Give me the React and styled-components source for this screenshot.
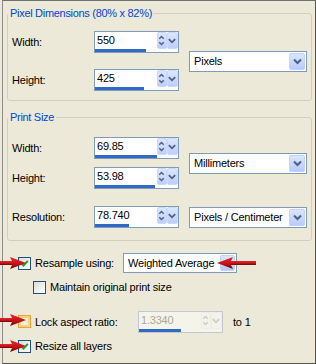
import React from 'react'
import styled, { createGlobalStyle } from 'styled-components'

const GlobalStyle = createGlobalStyle`
  html, body {
    margin: 0;
    padding: 0;
    background: #ece9d8;
  }
  body {
    font-family: "Liberation Sans", Arial, sans-serif;
    font-size: 11px;
    letter-spacing: -0.2px;
    color: #000;
  }
`

const pixelRows = [
  { label: 'Width:', value: '550', fill: 51 },
  { label: 'Height:', value: '425', fill: 49 },
]

const printRows = [
  { label: 'Width:', value: '69.85', fill: 62 },
  { label: 'Height:', value: '53.98', fill: 60 },
]

const Resize = () => (
  <Panel>
    <GlobalStyle />
    <Group>
      <Legend>Pixel Dimensions (80% x 82%)</Legend>
      <Fields $top={11} $bottom={9} $gap={16}>
        {pixelRows.map((row, idx) => (
          <React.Fragment key={row.label}>
            <Label $row={idx + 1}>{row.label}</Label>
            <Spin row={idx + 1} value={row.value} fill={row.fill} />
          </React.Fragment>
        ))}
        <Combo $row="1 / span 2" $w={118} $h={21}>
          <ComboText>Pixels</ComboText>
          <ComboButton>
            <Chevron />
          </ComboButton>
        </Combo>
      </Fields>
    </Group>

    <Group $space={10}>
      <Legend>Print Size</Legend>
      <Fields $top={13} $bottom={12} $gap={8}>
        {printRows.map((row, idx) => (
          <React.Fragment key={row.label}>
            <Label $row={idx + 1}>{row.label}</Label>
            <Spin row={idx + 1} value={row.value} fill={row.fill} />
          </React.Fragment>
        ))}
        <Combo $row="1 / span 2" $w={118} $h={21}>
          <ComboText>Millimeters</ComboText>
          <ComboButton>
            <Chevron />
          </ComboButton>
        </Combo>
        <Label $row={3} $push={9}>Resolution:</Label>
        <Spin row={3} push={9} value="78.740" fill={34} />
        <Combo $row={3} $push={9} $w={118} $h={21}>
          <ComboText>Pixels / Centimeter</ComboText>
          <ComboButton>
            <Chevron />
          </ComboButton>
        </Combo>
      </Fields>
    </Group>

    <Options>
      <OptionRow $h={22}>
        <Check checked />
        <CheckText $w={88}>Resample using:</CheckText>
        <Combo $w={114} $h={20}>
          <ComboText>Weighted Average</ComboText>
          <ComboButton $w={15}>
            <Chevron />
          </ComboButton>
        </Combo>
      </OptionRow>
      <OptionRow $h={20} $mt={3} $indent={15}>
        <Check />
        <CheckText>Maintain original print size</CheckText>
      </OptionRow>
      <OptionRow $h={23} $mt={13}>
        <Check hot />
        <CheckText $w={103}>Lock aspect ratio:</CheckText>
        <Spin value="1.3340" fill={42} disabled />
        <Suffix>to 1</Suffix>
      </OptionRow>
      <OptionRow $h={20} $mt={3}>
        <Check checked />
        <CheckText>Resize all layers</CheckText>
      </OptionRow>
    </Options>

    <Arrow x={-4} y={255} />
    <Arrow x={213} y={255} left />
    <Arrow x={-4} y={312} />
    <Arrow x={-4} y={338} />
  </Panel>
)

export default Resize

const Spin = ({ row, push, value, fill, disabled }) => (
  <SpinBox $row={row} $push={push} $disabled={disabled}>
    <SpinTop>
      <SpinValue $disabled={disabled}>{value}</SpinValue>
      <SpinButton $w={10} $disabled={disabled}>
        <svg width="10" height="17" viewBox="0 0 10 17">
          <polyline
            points="2.5,6.5 5,4 7.5,6.5"
            fill="none"
            stroke={disabled ? '#cfcdc2' : '#4d6185'}
            strokeWidth="1.6"
          />
          <polyline
            points="2.5,10.5 5,13 7.5,10.5"
            fill="none"
            stroke={disabled ? '#cfcdc2' : '#4d6185'}
            strokeWidth="1.6"
          />
        </svg>
      </SpinButton>
      <SpinButton $w={11} $disabled={disabled}>
        <svg width="11" height="17" viewBox="0 0 11 17">
          <polyline
            points="2,7 5.5,10.5 9,7"
            fill="none"
            stroke={disabled ? '#cfcdc2' : '#4d6185'}
            strokeWidth="2"
          />
        </svg>
      </SpinButton>
    </SpinTop>
    <BarTrack>
      <BarFill style={{ width: fill }} />
    </BarTrack>
  </SpinBox>
)

const Chevron = () => (
  <svg width="9" height="7" viewBox="0 0 9 7">
    <polyline
      points="1,1.5 4.5,5 8,1.5"
      fill="none"
      stroke="#4d6185"
      strokeWidth="2"
    />
  </svg>
)

const Check = ({ checked, hot }) => (
  <CheckBox $hot={hot}>
    {checked && (
      <svg width="9" height="9" viewBox="0 0 9 9">
        <polyline
          points="1.2,4.2 3.5,6.6 7.8,1.8"
          fill="none"
          stroke="#21a121"
          strokeWidth="2"
        />
      </svg>
    )}
  </CheckBox>
)

const Arrow = ({ x, y, left }) => (
  <ArrowMark $x={x} $y={y} $left={left}>
    <svg width="40" height="14" viewBox="0 0 40 14">
      <defs>
        <linearGradient id="red" x1="0" y1="0" x2="0" y2="1">
          <stop offset="0" stopColor="#e8262a" />
          <stop offset="0.55" stopColor="#c4141a" />
          <stop offset="1" stopColor="#6e0606" />
        </linearGradient>
      </defs>
      {left ? (
        <g fill="url(#red)">
          <rect x="14" y="5" width="26" height="4" />
          <polygon points="1,7 17,1 14,7 17,13" />
        </g>
      ) : (
        <g fill="url(#red)">
          <rect x="0" y="5" width="26" height="4" />
          <polygon points="39,7 23,1 26,7 23,13" />
        </g>
      )}
    </svg>
  </ArrowMark>
)

const Panel = styled.div`
  position: relative;
  box-sizing: border-box;
  width: 314px;
  height: 364px;
  margin-left: 2px;
  padding: 6px 3px 0 4px;
  background: #ece9d8;
  border: 1px solid #8c8c8c;
  border-top-color: #707070;
  border-right-color: #555555;
  border-bottom-color: #555555;
  overflow: visible;
`

const Group = styled.fieldset`
  margin: ${p => p.$space || 0}px 0 0 0;
  padding: 0;
  min-width: 0;
  border: 1px solid #d0d0bf;
  border-radius: 3px;
`

const Legend = styled.legend`
  margin: 0;
  padding: 0 2px;
  line-height: 13px;
  color: #0046d5;
  letter-spacing: -0.3px;
`

const Fields = styled.div`
  display: grid;
  grid-template-columns: 72px 85px 118px;
  column-gap: 10px;
  row-gap: ${p => p.$gap}px;
  padding: ${p => p.$top}px 0 ${p => p.$bottom}px 4px;
`

const Label = styled.div`
  grid-column: 1;
  grid-row: ${p => p.$row};
  align-self: center;
  margin-top: ${p => p.$push || 0}px;
`

const SpinBox = styled.div`
  grid-column: 2;
  grid-row: ${p => p.$row || 'auto'};
  margin-top: ${p => p.$push || 0}px;
  box-sizing: border-box;
  width: 85px;
  height: 22px;
  display: flex;
  flex-direction: column;
  border: 1px solid ${p => (p.$disabled ? '#c3c8d0' : '#7f9db9')};
  background: ${p => (p.$disabled ? '#f5f4ea' : '#ffffff')};
`

const SpinTop = styled.div`
  display: flex;
  height: 17px;
`

const SpinValue = styled.div`
  flex: 1;
  padding-left: 2px;
  line-height: 17px;
  color: ${p => (p.$disabled ? '#aca899' : '#000000')};
`

const SpinButton = styled.div`
  box-sizing: border-box;
  width: ${p => p.$w}px;
  height: 17px;
  display: flex;
  border-radius: 2px;
  border: 1px solid ${p => (p.$disabled ? '#eeede5' : '#c9d8fb')};
  background: ${p =>
    p.$disabled
      ? '#f3f2ec'
      : 'linear-gradient(#dce7fe, #bccefa)'};
  svg {
    margin: -1px 0 0 -1px;
  }
`

const BarTrack = styled.div`
  flex: 1;
  display: flex;
  align-items: flex-end;
`

const BarFill = styled.div`
  height: 3px;
  background: #316ac5;
`

const Combo = styled.div`
  grid-column: 3;
  grid-row: ${p => p.$row || 'auto'};
  align-self: center;
  margin-top: ${p => p.$push || 0}px;
  box-sizing: border-box;
  width: ${p => p.$w}px;
  height: ${p => p.$h}px;
  display: flex;
  align-items: center;
  padding: 1px;
  border: 1px solid #7f9db9;
  background: #ffffff;
`

const ComboText = styled.div`
  flex: 1;
  padding-left: 3px;
  white-space: nowrap;
`

const ComboButton = styled.div`
  box-sizing: border-box;
  width: ${p => p.$w || 16}px;
  align-self: stretch;
  display: flex;
  align-items: center;
  justify-content: center;
  border-radius: 2px;
  border: 1px solid #c3d3fd;
  background: linear-gradient(#dbe6fe, #b6cbf8);
`

const Options = styled.div`
  display: flex;
  flex-direction: column;
  padding: 11px 0 0 11px;
`

const OptionRow = styled.div`
  display: flex;
  align-items: center;
  height: ${p => p.$h}px;
  margin-top: ${p => p.$mt || 0}px;
  padding-left: ${p => p.$indent || 0}px;
`

const CheckBox = styled.span`
  box-sizing: border-box;
  flex: none;
  width: 13px;
  height: 13px;
  display: flex;
  align-items: center;
  justify-content: center;
  border: 1px solid ${p => (p.$hot ? '#e9a33f' : '#1c5180')};
  box-shadow: ${p => (p.$hot ? 'inset 0 0 0 2px #fcd27e' : 'none')};
  background: ${p =>
    p.$hot ? '#f1efe2' : 'linear-gradient(135deg, #dcdcd5, #ffffff)'};
`

const CheckText = styled.span`
  flex: none;
  width: ${p => (p.$w ? `${p.$w}px` : 'auto')};
  margin-left: 4px;
  white-space: nowrap;
`

const Suffix = styled.span`
  margin-left: 10px;
`

const ArrowMark = styled.div`
  position: absolute;
  left: ${p => p.$x}px;
  top: ${p => p.$y}px;
  width: 40px;
  height: 14px;
  line-height: 0;
  svg {
    display: block;
    ${p => (p.$left ? '' : 'margin-left: -12px;')}
  }
`
